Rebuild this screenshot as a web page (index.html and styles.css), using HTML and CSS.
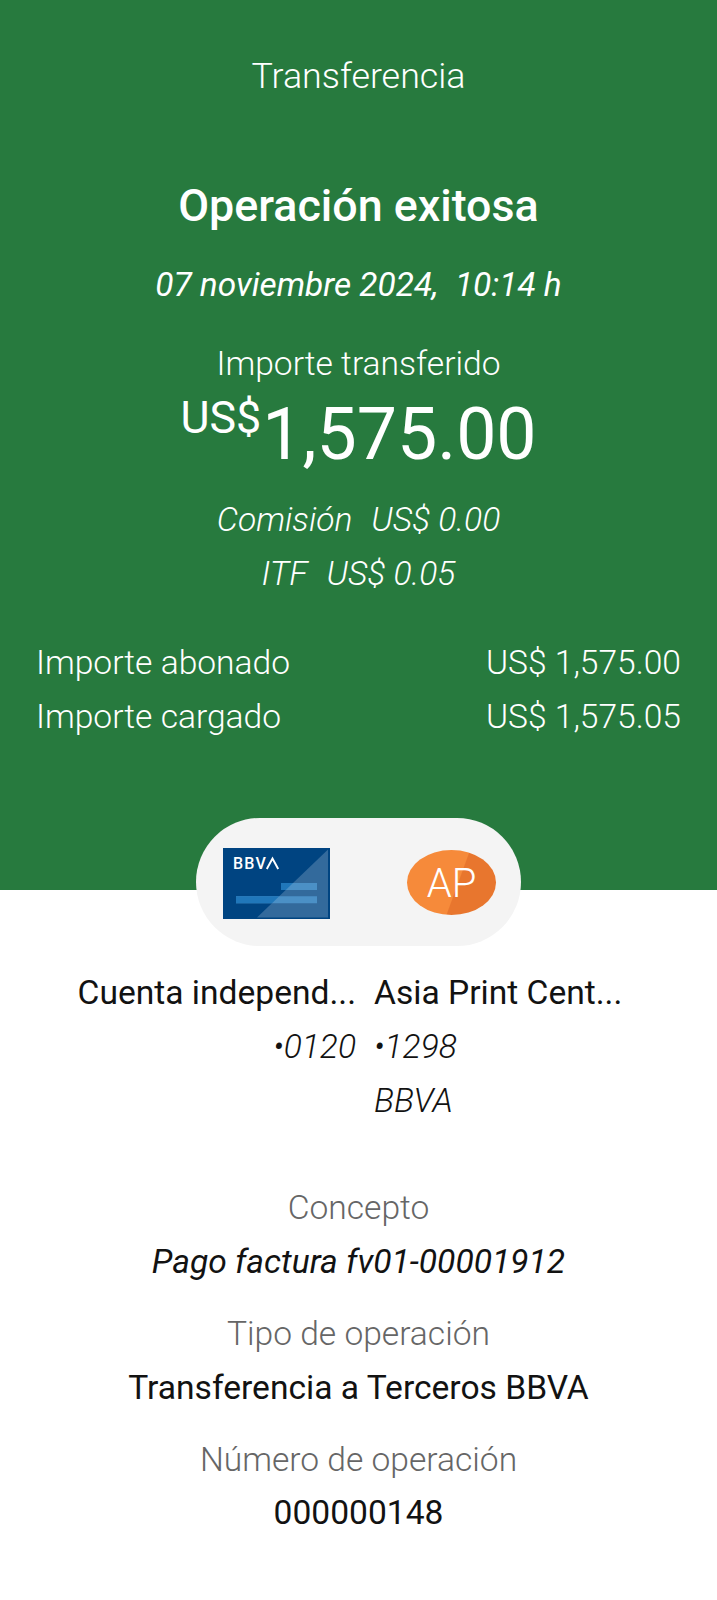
FILE: index.html
```html
<!DOCTYPE html>
<html lang="es">
<head>
<meta charset="utf-8">
<title>Transferencia</title>
<link rel="stylesheet" href="styles.css">
</head>
<body>
<header class="summary">
  <p class="screen-title">Transferencia</p>
  <h1 class="result">Operación exitosa</h1>
  <p class="date">07 noviembre 2024,&nbsp; 10:14 h</p>
  <p class="label">Importe transferido</p>
  <p class="amount"><span class="currency">US$</span><span class="value">1,575.00</span></p>
  <p class="fee"><span>Comisión</span><span>US$ 0.00</span></p>
  <p class="fee"><span>ITF</span><span>US$ 0.05</span></p>
  <dl class="totals">
    <div class="row"><dt>Importe abonado</dt><dd>US$ 1,575.00</dd></div>
    <div class="row"><dt>Importe cargado</dt><dd>US$ 1,575.05</dd></div>
  </dl>
</header>
<main class="details">
  <div class="pill">
    <svg class="card" viewBox="0 0 107 71" width="107" height="71">
      <rect width="107" height="71" fill="#004481"/>
      <path d="M105 1.5V69.500H34Z" fill="#336a9c"/>
      <path d="M58 35H94V42H58ZM13 48.300H94V55.300H13Z" fill="#4b90c6"/>
      <path d="M13 48.300H56.200L49 55.300H13ZM58 35H70L62.800 42H58Z" fill="#2077ba"/>
      <text x="9.900" y="21.400" class="brand">BBV</text>
      <path d="M43.800 21L49.500 10.500L55.200 21" fill="none" stroke="#fff" stroke-width="1.900"/>
    </svg>
    <div class="avatar">AP</div>
  </div>
  <div class="parties">
    <div class="from"><p class="name">Cuenta independ...</p><p class="sub">•0120</p></div>
    <div class="to"><p class="name">Asia Print Cent...</p><p class="sub">•1298</p><p class="sub">BBVA</p></div>
  </div>
  <section class="field"><p class="key">Concepto</p><p class="val italic">Pago factura fv01-00001912</p></section>
  <section class="field"><p class="key">Tipo de operación</p><p class="val">Transferencia a Terceros BBVA</p></section>
  <section class="field"><p class="key">Número de operación</p><p class="val">000000148</p></section>
</main>
</body>
</html>
```
FILE: styles.css
```css
* { box-sizing: border-box; margin: 0; padding: 0; }
body { width: 717px; height: 1600px; overflow: hidden; background: #fff; color: #121212; font-family: Roboto, sans-serif; font-size: 33.6px; line-height: 53.8px; text-align: center; white-space: nowrap; }
.summary { height: 890px; padding-top: 50px; background: #277a3e; color: #fff; font-weight: 300; }
.screen-title { font-size: 35.8px; }
.result { margin-top: 75px; font-size: 44.8px; font-weight: 500; }
.date { margin-top: 25px; font-size: 33.4px; font-style: italic; font-weight: 400; }
.label { margin-top: 26px; }
.amount { display: flex; justify-content: center; height: 84px; font-weight: 400; }
.currency { padding-right: 1px; font-size: 44.8px; line-height: 53px; }
.value { font-size: 71.6px; line-height: 88px; }
.amount + .fee { margin-top: 18px; }
.fee { display: flex; justify-content: center; gap: 19px; font-style: italic; }
.totals { margin-top: 35px; padding: 0 36px; }
.row { display: flex; justify-content: space-between; }
.details { display: flex; flex-direction: column; align-items: center; }
.pill { display: flex; align-items: center; justify-content: space-between; width: 325px; height: 128px; margin-top: -72px; padding: 2px 25px 0 27px; border-radius: 64px; background: #f4f4f4; }
.brand { fill: #fff; font-size: 16px; font-weight: 500; letter-spacing: 1.3px; }
.avatar { width: 89px; height: 65px; margin-bottom: 2px; border-radius: 50%; background: linear-gradient(110deg, #f68a3a 55.5%, #e8762e 56.5%); color: #fff; font-size: 40px; font-weight: 300; line-height: 67px; }
.parties { display: grid; grid-template-columns: 356px 1fr; gap: 18px; width: 100%; margin-top: 20px; }
.from { text-align: right; }
.to { text-align: left; }
.sub { font-style: italic; font-weight: 300; }
.field { margin-top: 18px; }
.parties + .field { margin-top: 54px; }
.key { color: #666; font-weight: 300; }
.italic { font-style: italic; }
```
